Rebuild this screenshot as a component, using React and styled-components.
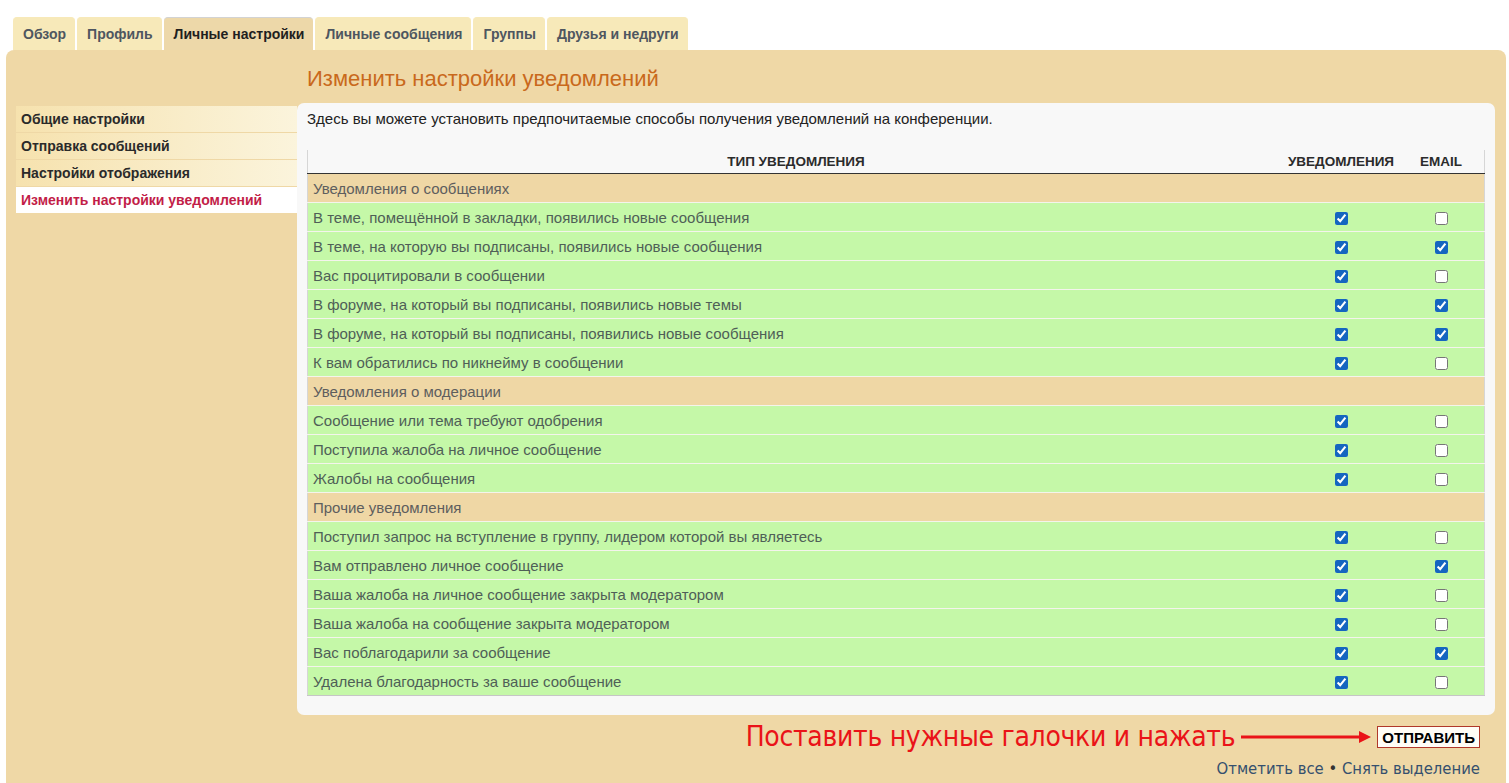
import React, { useState } from 'react';
import styled, { createGlobalStyle } from 'styled-components';

const GlobalStyle = createGlobalStyle`
  body {
    margin: 0;
    background: #ffffff;
    font-family: "Liberation Sans", Arial, sans-serif;
  }
`;

const Page = styled.div`
  padding: 17px 3px 0 6px;
`;

const Tabs = styled.ul`
  display: flex;
  gap: 2px;
  list-style: none;
  margin: 0 0 0 7px;
  padding: 0;
  height: 33px;
`;

const Tab = styled.li`
  display: flex;
  align-items: center;
  padding: 0 9px 0 10px;
  height: 32px;
  font-size: 14px;
  font-weight: bold;
  color: ${(p) => (p.$active ? '#1f1f1f' : '#4e5660')};
  background: ${(p) => (p.$active ? '#edd8a9' : '#f7e9b9')};
  border-top: 1px solid ${(p) => (p.$active ? '#d3d3d3' : '#f7e9b9')};
  border-radius: 4px 4px 0 0;
`;

const Panel = styled.div`
  background: #efd8a6;
  border-radius: 8px 8px 0 0;
  padding: 14px 11px 10px 10px;
  min-height: 720px;
  box-sizing: border-box;
`;

const Layout = styled.div`
  display: grid;
  grid-template-columns: 281px 1fr;
  grid-template-rows: auto auto;
`;

const Heading = styled.h2`
  grid-column: 2;
  margin: 0 0 10px 10px;
  font-size: 22px;
  font-weight: normal;
  color: #c9691c;
  line-height: 29px;
`;

const Menu = styled.ul`
  grid-column: 1;
  grid-row: 2;
  list-style: none;
  margin: 3px 0 0;
  padding: 0;
`;

const MenuItem = styled.li`
  height: 26px;
  line-height: 26px;
  padding-left: 5px;
  font-size: 14px;
  font-weight: bold;
  color: ${(p) => (p.$active ? '#c21d48' : '#2a2a2a')};
  background: ${(p) =>
    p.$active ? '#ffffff' : 'linear-gradient(to right, #f6e2ae, #fbf4dc)'};
  border-bottom: 1px solid #efd8a6;
`;

const Content = styled.div`
  grid-column: 2;
  grid-row: 2;
  background: #f8f8f8;
  border-radius: 7px;
  padding: 6px 10px 19px;
`;

const Intro = styled.p`
  margin: 0 0 22px;
  font-size: 15px;
  color: #222;
  line-height: 19px;
`;

const Table = styled.table`
  width: 100%;
  border-collapse: collapse;
  border-left: 1px solid #d6d6d6;
  border-right: 1px solid #d6d6d6;
  border-bottom: 1px solid #c6c6c6;
  font-size: 15px;
`;

const HeadCell = styled.th`
  font-size: 13.5px;
  font-weight: bold;
  text-transform: uppercase;
  color: #2b2b2b;
  height: 22px;
  padding: 0 0 1px;
  width: ${(p) => p.$width || 'auto'};
  text-align: center;
  background: #f8f8f8;
  border-bottom: 1px solid #333;
`;

const Row = styled.tr`
  background: ${(p) => (p.$section ? '#efd7a5' : '#c5f8a8')};
  color: ${(p) => (p.$section ? '#5e5e5e' : '#4f5f57')};
  & td {
    height: 28px;
    padding-top: 0;
    padding-bottom: 0;
    border-top: 1px solid #f4f4ec;
  }
`;

const Label = styled.td`
  padding: 0 5px;
`;

const Check = styled.td`
  text-align: center;
  & input {
    margin: 0;
    width: 13px;
    height: 13px;
    vertical-align: middle;
    accent-color: #1566c0;
  }
`;

const Footer = styled.div`
  display: flex;
  flex-direction: column;
  align-items: flex-end;
  padding: 6px 15px 0 0;
`;

const SubmitRow = styled.div`
  display: flex;
  align-items: center;
  gap: 4px;
`;

const Hint = styled.span`
  font-family: "DejaVu Sans Condensed", "Liberation Sans Narrow", "Open Sans", sans-serif;
  font-stretch: condensed;
  font-size: 28px;
  line-height: 32px;
  color: #ea1318;
  letter-spacing: -0.3px;
`;

const SubmitButton = styled.button`
  font-family: "Liberation Sans", Arial, sans-serif;
  font-size: 15px;
  font-weight: bold;
  color: #000;
  background: #fffdf6;
  border: 1px solid #b0382a;
  padding: 0 4px;
  height: 22px;
`;

const Links = styled.div`
  margin-top: 6px;
  font-family: "DejaVu Sans Condensed", "Liberation Sans Narrow", sans-serif;
  font-stretch: condensed;
  font-size: 16.5px;
  color: #333;
  & a {
    color: #35506e;
    text-decoration: none;
  }
`;

const sections = [
  {
    title: 'Уведомления о сообщениях',
    items: [
      ['В теме, помещённой в закладки, появились новые сообщения', true, false],
      ['В теме, на которую вы подписаны, появились новые сообщения', true, true],
      ['Вас процитировали в сообщении', true, false],
      ['В форуме, на который вы подписаны, появились новые темы', true, true],
      ['В форуме, на который вы подписаны, появились новые сообщения', true, true],
      ['К вам обратились по никнейму в сообщении', true, false],
    ],
  },
  {
    title: 'Уведомления о модерации',
    items: [
      ['Сообщение или тема требуют одобрения', true, false],
      ['Поступила жалоба на личное сообщение', true, false],
      ['Жалобы на сообщения', true, false],
    ],
  },
  {
    title: 'Прочие уведомления',
    items: [
      ['Поступил запрос на вступление в группу, лидером которой вы являетесь', true, false],
      ['Вам отправлено личное сообщение', true, true],
      ['Ваша жалоба на личное сообщение закрыта модератором', true, false],
      ['Ваша жалоба на сообщение закрыта модератором', true, false],
      ['Вас поблагодарили за сообщение', true, true],
      ['Удалена благодарность за ваше сообщение', true, false],
    ],
  },
];

const tabs = ['Обзор', 'Профиль', 'Личные настройки', 'Личные сообщения', 'Группы', 'Друзья и недруги'];
const menu = ['Общие настройки', 'Отправка сообщений', 'Настройки отображения', 'Изменить настройки уведомлений'];

const Arrow = () => (
  <svg width="134" height="14" viewBox="0 0 134 14">
    <line x1="2" y1="7" x2="124" y2="7" stroke="#ea1318" strokeWidth="3" />
    <path d="M120 1 L132 7 L120 13 Z" fill="#ea1318" />
  </svg>
);

const App = () => {
  const [rows, setRows] = useState(() =>
    sections.map((s) => s.items.map(([, n, e]) => [n, e]))
  );

  const toggle = (si, ii, col) => {
    setRows((prev) =>
      prev.map((sec, a) =>
        a !== si ? sec : sec.map((r, b) => (b !== ii ? r : r.map((v, c) => (c === col ? !v : v))))
      )
    );
  };

  return (
    <>
      <GlobalStyle />
      <Page>
        <Tabs>
          {tabs.map((t) => (
            <Tab key={t} $active={t === 'Личные настройки'}>{t}</Tab>
          ))}
        </Tabs>
        <Panel>
          <Layout>
            <Heading>Изменить настройки уведомлений</Heading>
            <Menu>
              {menu.map((m, i) => (
                <MenuItem key={m} $active={i === menu.length - 1}>{m}</MenuItem>
              ))}
            </Menu>
            <Content>
              <Intro>
                Здесь вы можете установить предпочитаемые способы получения уведомлений на конференции.
              </Intro>
              <Table>
                <thead>
                  <tr>
                    <HeadCell>Тип уведомления</HeadCell>
                    <HeadCell $width="114px">Уведомления</HeadCell>
                    <HeadCell $width="86px">Email</HeadCell>
                  </tr>
                </thead>
                <tbody>
                  {sections.map((s, si) => (
                    <React.Fragment key={s.title}>
                      <Row $section>
                        <Label colSpan={3}>{s.title}</Label>
                      </Row>
                      {s.items.map(([text], ii) => (
                        <Row key={text}>
                          <Label>{text}</Label>
                          <Check>
                            <input
                              type="checkbox"
                              checked={rows[si][ii][0]}
                              onChange={() => toggle(si, ii, 0)}
                            />
                          </Check>
                          <Check>
                            <input
                              type="checkbox"
                              checked={rows[si][ii][1]}
                              onChange={() => toggle(si, ii, 1)}
                            />
                          </Check>
                        </Row>
                      ))}
                    </React.Fragment>
                  ))}
                </tbody>
              </Table>
            </Content>
          </Layout>
          <Footer>
            <SubmitRow>
              <Hint>Поставить нужные галочки и нажать</Hint>
              <Arrow />
              <SubmitButton>ОТПРАВИТЬ</SubmitButton>
            </SubmitRow>
            <Links>
              <a href="#all">Отметить все</a> • <a href="#none">Снять выделение</a>
            </Links>
          </Footer>
        </Panel>
      </Page>
    </>
  );
};

export default App;
